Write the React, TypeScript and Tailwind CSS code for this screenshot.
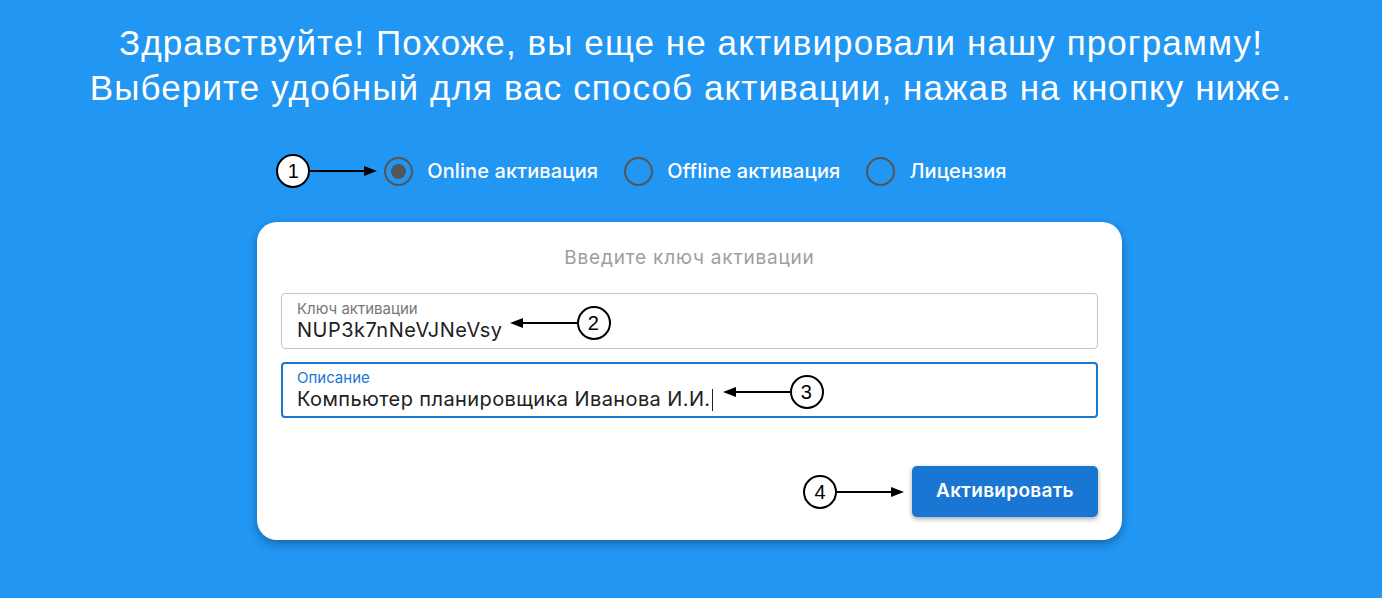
import React, { useState } from "react";

type Dir = "right" | "left";

// Numbered callout: a white circle with a digit and a black arrow
const Callout: React.FC<{ n: number; dir: Dir; className?: string }> = ({ n, dir, className = "" }) => {
  const circle = (
    <div className="w-[34px] h-[34px] shrink-0 rounded-full border-2 border-black bg-white flex items-center justify-center text-[20px] leading-none text-black font-['Liberation_Sans',sans-serif]">
      {n}
    </div>
  );
  const arrow = (
    <svg width="67" height="14" viewBox="0 0 67 14" className="shrink-0">
      {dir === "right" ? (
        <>
          <line x1="0" y1="7" x2="56" y2="7" stroke="#000" strokeWidth="2" />
          <polygon points="54,2 67,7 54,12" fill="#000" />
        </>
      ) : (
        <>
          <line x1="11" y1="7" x2="67" y2="7" stroke="#000" strokeWidth="2" />
          <polygon points="13,2 0,7 13,12" fill="#000" />
        </>
      )}
    </svg>
  );
  return (
    <div className={`flex items-center pointer-events-none ${className}`}>
      {dir === "right" ? (
        <>
          {circle}
          {arrow}
        </>
      ) : (
        <>
          {arrow}
          {circle}
        </>
      )}
    </div>
  );
};

const Radio: React.FC<{ label: string; checked: boolean; onClick: () => void }> = ({ label, checked, onClick }) => (
  <button onClick={onClick} className="flex items-center gap-[14px] cursor-pointer">
    <span className="w-[29px] h-[29px] rounded-full border-[2.5px] border-[#555] flex items-center justify-center">
      {checked && <span className="w-[15px] h-[15px] rounded-full bg-[#555]" />}
    </span>
    <span className="text-[20px] font-medium text-white tracking-[0.1px]">{label}</span>
  </button>
);

export default function App() {
  const [mode, setMode] = useState("online");

  return (
    <div className="w-full h-[598px] bg-[#2196F3] overflow-hidden font-['Inter',sans-serif]">
      {/* Heading */}
      <h1 className="pt-[20px] text-center text-white text-[35px] leading-[45px] tracking-[1.1px] font-['Liberation_Sans',sans-serif]">
        Здравствуйте! Похоже, вы еще не активировали нашу программу!
        <br />
        Выберите удобный для вас способ активации, нажав на кнопку ниже.
      </h1>

      {/* Mode switch */}
      <div className="mt-[44px] flex justify-center">
        <div className="relative ml-[9px] h-[34px] flex items-center gap-[26px]">
          <Callout n={1} dir="right" className="absolute right-full mr-[7px] top-1/2 -translate-y-1/2" />
          <Radio label="Online активация" checked={mode === "online"} onClick={() => setMode("online")} />
          <Radio label="Offline активация" checked={mode === "offline"} onClick={() => setMode("offline")} />
          <Radio label="Лицензия" checked={mode === "license"} onClick={() => setMode("license")} />
        </div>
      </div>

      {/* Card */}
      <div className="mt-[34px] flex justify-center pr-[3px]">
        <div className="w-[865px] bg-white rounded-[20px] shadow-[0_4px_10px_rgba(0,0,0,0.3)] px-[24px] pt-[25px] pb-[23px]">
          <div className="text-center text-[19px] leading-[22px] tracking-[0.8px] text-[#9e9e9e]">Введите ключ активации</div>

          <div className="mt-[24px] h-[56px] rounded-[4px] border border-[#c4c4c4] px-[15px] pt-[6px]">
            <div className="text-[15px] leading-[18px] text-[#777]">Ключ активации</div>
            <div className="text-[20px] leading-[24px] tracking-[0.5px] text-[#212121]">
              <span className="relative">
                NUP3k7nNeVJNeVsy
                <Callout n={2} dir="left" className="absolute left-full ml-[7px] top-1/2 -translate-y-[calc(50%+7px)]" />
              </span>
            </div>
          </div>

          <div className="mt-[13px] h-[56px] rounded-[4px] border-2 border-[#1976D2] px-[14px] pt-[5px]">
            <div className="text-[15px] leading-[18px] text-[#1976D2]">Описание</div>
            <div className="text-[20px] leading-[24px] tracking-[0.4px] text-[#212121]">
              <span className="relative">
                Компьютер планировщика Иванова И.И.
                <span className="absolute left-full ml-[1px] top-[2px] w-px h-[22px] bg-[#222]" />
                <Callout n={3} dir="left" className="absolute left-full ml-[12px] top-1/2 -translate-y-[calc(50%+7px)]" />
              </span>
            </div>
          </div>

          <div className="mt-[48px] flex justify-end">
            <div className="relative">
              <Callout n={4} dir="right" className="absolute right-full mr-[8px] top-1/2 -translate-y-1/2" />
              <button className="w-[186px] h-[51px] rounded-[5px] bg-[#1976D2] text-white text-[19px] tracking-[0.3px] font-semibold shadow-[0_2px_5px_rgba(0,0,0,0.35)]">
                Активировать
              </button>
            </div>
          </div>
        </div>
      </div>
    </div>
  );
}
